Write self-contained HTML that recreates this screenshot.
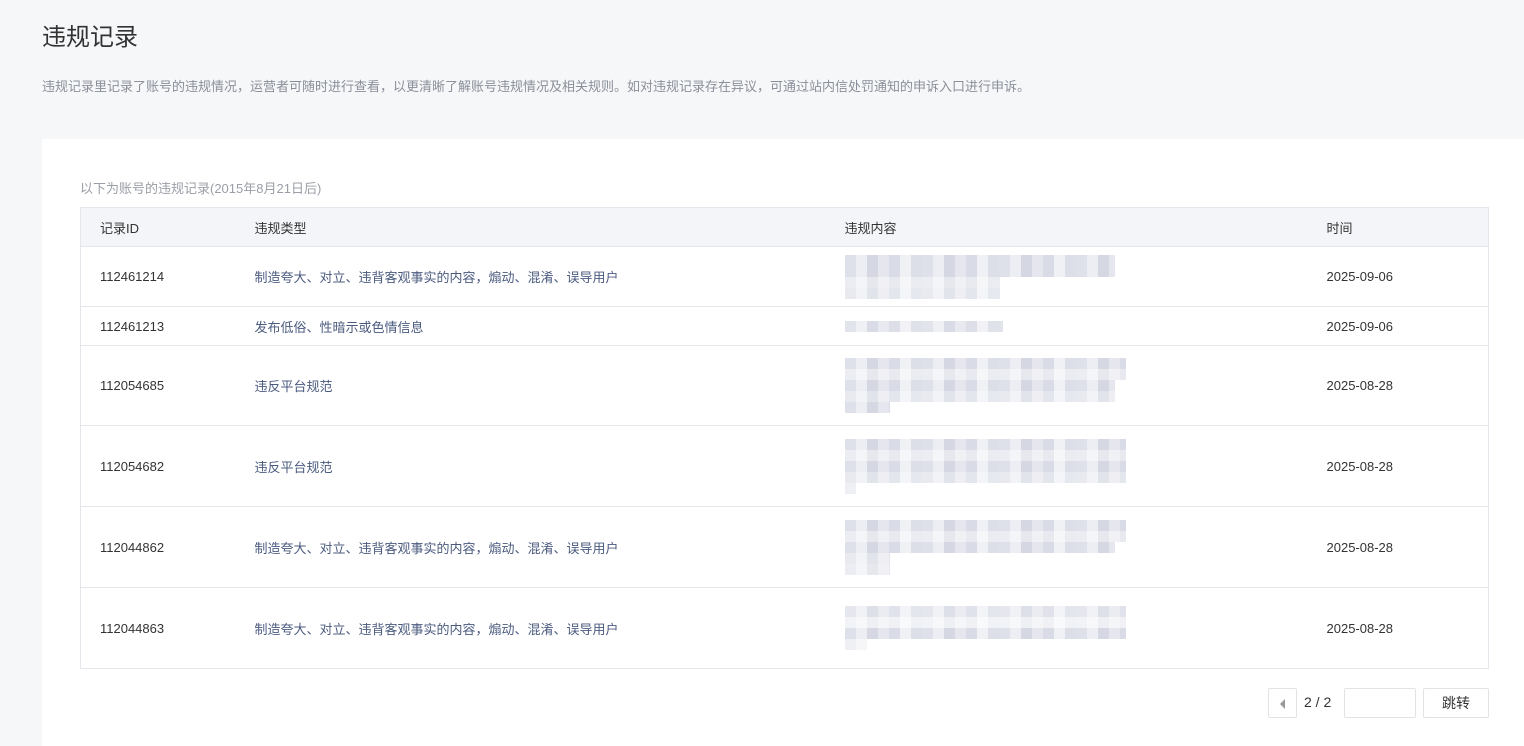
<!DOCTYPE html>
<html><head><meta charset="utf-8"><style>
*{margin:0;padding:0;box-sizing:border-box}
body{width:1524px;height:746px;overflow:hidden;background:#f6f7f9;font-family:"Liberation Sans","Noto Sans CJK SC",sans-serif;color:#333;position:relative}
h1{position:absolute;left:42px;top:17px;font-size:24px;font-weight:normal;color:#333}
.desc{position:absolute;left:42px;top:76px;font-size:13px;color:#8a8f99}
.panel{position:absolute;left:42px;top:139px;right:0;bottom:0;background:#fff}
.sub{position:absolute;left:80px;top:178px;font-size:13px;color:#9a9ea6}
table{position:absolute;left:80px;top:207px;width:1409px;border-collapse:collapse;border:1px solid #e4e6eb;font-size:13px}
th{background:#f4f5f8;font-weight:normal;text-align:left;height:39px;color:#333;border-bottom:1px solid #e4e6eb}
td{border-bottom:1px solid #e4e6eb;color:#333;vertical-align:middle;position:relative}
td.t{color:#4a5a7e}
.c1{padding-left:19px;width:174px}.c2{width:590px}.c3{width:482px}
.px{position:relative}
.px div{height:11px;background:repeating-linear-gradient(90deg,#dfe1ea 0 11px,#eceef3 11px 22px,#d5d8e3 22px 33px,#e6e7ee 33px 44px,#d9dbe6 44px 55px,#f0f1f5 55px 66px,#dcdfe8 66px 77px)}
.pg{position:absolute;top:688px;height:30px;border:1px solid #e2e3e6;border-radius:2px;background:#fff;font-size:14px;text-align:center;line-height:28px}
</style></head><body>
<h1>违规记录</h1>
<div class="desc">违规记录里记录了账号的违规情况，运营者可随时进行查看，以更清晰了解账号违规情况及相关规则。如对违规记录存在异议，可通过站内信处罚通知的申诉入口进行申诉。</div>
<div class="panel"></div>
<div class="sub">以下为账号的违规记录(2015年8月21日后)</div>
<table>
<tr><th class="c1">记录ID</th><th class="c2">违规类型</th><th class="c3">违规内容</th><th>时间</th></tr>
<tr style="height:60px"><td class="c1">112461214</td><td class="t">制造夸大、对立、违背客观事实的内容，煽动、混淆、误导用户</td><td><div class="px"><div style="width:270px"></div><div style="width:270px"></div><div style="width:155px;opacity:.6"></div><div style="width:155px;opacity:.7"></div></div></td><td>2025-09-06</td></tr>
<tr style="height:39px"><td class="c1">112461213</td><td class="t">发布低俗、性暗示或色情信息</td><td><div class="px"><div style="width:158px;opacity:.9"></div></div></td><td>2025-09-06</td></tr>
<tr style="height:80px"><td class="c1">112054685</td><td class="t">违反平台规范</td><td><div class="px"><div style="width:281px"></div><div style="width:281px;opacity:.6"></div><div style="width:270px"></div><div style="width:270px;opacity:.7"></div><div style="width:45px"></div></div></td><td>2025-08-28</td></tr>
<tr style="height:81px"><td class="c1">112054682</td><td class="t">违反平台规范</td><td><div class="px"><div style="width:281px"></div><div style="width:281px;opacity:.6"></div><div style="width:281px"></div><div style="width:281px;opacity:.7"></div><div style="width:11px;opacity:.5"></div></div></td><td>2025-08-28</td></tr>
<tr style="height:81px"><td class="c1">112044862</td><td class="t">制造夸大、对立、违背客观事实的内容，煽动、混淆、误导用户</td><td><div class="px"><div style="width:281px"></div><div style="width:281px;opacity:.6"></div><div style="width:270px"></div><div style="width:45px;opacity:.7"></div><div style="width:45px;opacity:.6"></div></div></td><td>2025-08-28</td></tr>
<tr style="height:81px"><td class="c1">112044863</td><td class="t">制造夸大、对立、违背客观事实的内容，煽动、混淆、误导用户</td><td><div class="px"><div style="width:281px;opacity:.8"></div><div style="width:281px;opacity:.4"></div><div style="width:281px"></div><div style="width:22px;opacity:.5"></div></div></td><td>2025-08-28</td></tr>
</table>
<div class="pg" style="left:1268px;width:29px"><span style="display:inline-block;width:0;height:0;border-top:5px solid transparent;border-bottom:5px solid transparent;border-right:5px solid #999;vertical-align:middle"></span></div>
<div style="position:absolute;left:1304px;top:694px;font-size:14px;color:#333">2 / 2</div>
<div class="pg" style="left:1344px;width:72px"></div>
<div class="pg" style="left:1423px;width:66px">跳转</div>
</body></html>
